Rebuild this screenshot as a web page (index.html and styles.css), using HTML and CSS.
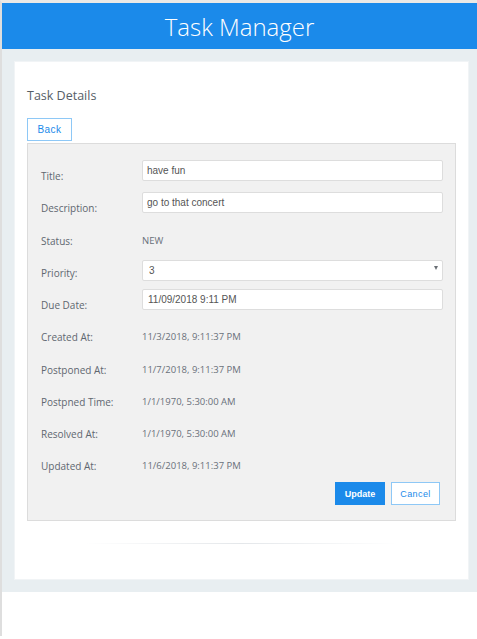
FILE: index.html
```html
<!DOCTYPE html>
<html lang="en">
<head>
<meta charset="utf-8">
<title>Task Manager</title>
<link rel="stylesheet" href="styles.css">
</head>
<body>
<div class="app">
  <header class="topbar">
    <h1 class="brand">Task Manager</h1>
  </header>
  <main class="main">
    <section class="card">
      <h2 class="card-title">Task Details</h2>
      <button class="btn btn-outline btn-back" type="button">Back</button>
      <div class="panel">
        <div class="grid">
          <label class="lbl">Title:</label>
          <input class="field" type="text" value="have fun">
          <label class="lbl">Description:</label>
          <input class="field" type="text" value="go to that concert">
          <span class="lbl">Status:</span>
          <span class="val">NEW</span>
          <label class="lbl">Priority:</label>
          <div class="select-wrap">
            <select class="field select">
              <option>3</option>
            </select>
            <span class="caret"></span>
          </div>
          <label class="lbl">Due Date:</label>
          <input class="field field-date" type="text" value="11/09/2018 9:11 PM">
          <span class="lbl">Created At:</span>
          <span class="val">11/3/2018, 9:11:37 PM</span>
          <span class="lbl">Postponed At:</span>
          <span class="val">11/7/2018, 9:11:37 PM</span>
          <span class="lbl">Postpned Time:</span>
          <span class="val">1/1/1970, 5:30:00 AM</span>
          <span class="lbl">Resolved At:</span>
          <span class="val">1/1/1970, 5:30:00 AM</span>
          <span class="lbl">Updated At:</span>
          <span class="val">11/6/2018, 9:11:37 PM</span>
        </div>
        <div class="actions">
          <button class="btn btn-primary" type="button">Update</button>
          <button class="btn btn-outline" type="button">Cancel</button>
        </div>
      </div>
      <div class="divider"></div>
    </section>
  </main>
</div>
</body>
</html>
```

FILE: styles.css
```css
html, body {
  margin: 0;
  padding: 0;
  background: #ffffff;
}
body {
  font-family: "Open Sans", "Noto Sans", sans-serif;
  height: 639px;
}
.app {
  border-top: 3px solid #ebe9e6;
  border-left: 2px solid #dedede;
  min-height: 636px;
  box-sizing: border-box;
}
.topbar {
  background: #1b8aea;
  height: 46px;
  display: flex;
  align-items: center;
  justify-content: center;
}
.brand {
  margin: 2px 0 0 0;
  color: #ffffff;
  font-weight: 300;
  font-size: 24px;
  letter-spacing: 0;
  line-height: 1;
}
.main {
  background: #e8eef1;
  padding: 12px 8px 12px 12px;
}
.card {
  background: #ffffff;
  border: 1px solid #f1f4f6;
  padding: 25px 12px 35px 12px;
  display: flex;
  flex-direction: column;
  align-items: flex-start;
}
.card-title {
  margin: 0 0 13px 0;
  font-size: 12.5px;
  line-height: 18px;
  font-weight: 400;
  color: #565e67;
}
.btn {
  font-family: "Liberation Sans", Arial, sans-serif;
  height: 23px;
  padding: 0;
  cursor: pointer;
  box-sizing: border-box;
}
.btn-outline {
  background: #ffffff;
  border: 1px solid #8ec8f6;
  color: #1b8aea;
  font-size: 9px;
  letter-spacing: 0.4px;
  width: 49px;
}
.btn-back {
  width: 45px;
  font-size: 10px;
  letter-spacing: 0.5px;
  margin-bottom: 2px;
}
.btn-primary {
  background: #1b8aea;
  border: 1px solid #1b8aea;
  color: #ffffff;
  font-weight: 700;
  font-size: 9px;
  width: 50px;
}
.panel {
  align-self: stretch;
  background: #f1f1f1;
  border: 1px solid #dcdcdc;
  padding: 16px 12px 15px 13px;
}
.grid {
  display: grid;
  grid-template-columns: 101px 1fr;
  grid-auto-rows: 21px;
  row-gap: 11.25px;
  align-items: end;
}
.lbl {
  font-size: 10px;
  line-height: 12px;
  color: #5f6770;
  margin-bottom: -1px;
}
.val {
  font-size: 9.5px;
  line-height: 12px;
  color: #69707a;
  margin-bottom: -1px;
}
.field {
  box-sizing: border-box;
  height: 21px;
  width: 100%;
  border: 1px solid #dddddd;
  border-radius: 2px;
  background: #ffffff;
  font-family: "Liberation Sans", Arial, sans-serif;
  font-size: 10px;
  color: #555555;
  padding: 0 4px;
  margin: 0;
  outline: none;
  align-self: stretch;
}
.field-date {
  padding-left: 5px;
}
.select-wrap {
  position: relative;
  align-self: stretch;
}
.select {
  appearance: none;
  -webkit-appearance: none;
  padding-left: 6px;
  height: 21px;
}
.caret {
  position: absolute;
  right: 5px;
  top: 9px;
  width: 0;
  height: 0;
  border-left: 2.5px solid transparent;
  border-right: 2.5px solid transparent;
  border-top: 4px solid #6a6f75;
}
.actions {
  display: flex;
  justify-content: flex-end;
  gap: 6px;
  margin-top: 11px;
  margin-right: 3px;
}
.divider {
  align-self: center;
  width: 313px;
  height: 1px;
  margin-top: 22px;
  background: linear-gradient(to right, rgba(220,224,228,0), #e4e7ea 50%, rgba(220,224,228,0));
}
```
